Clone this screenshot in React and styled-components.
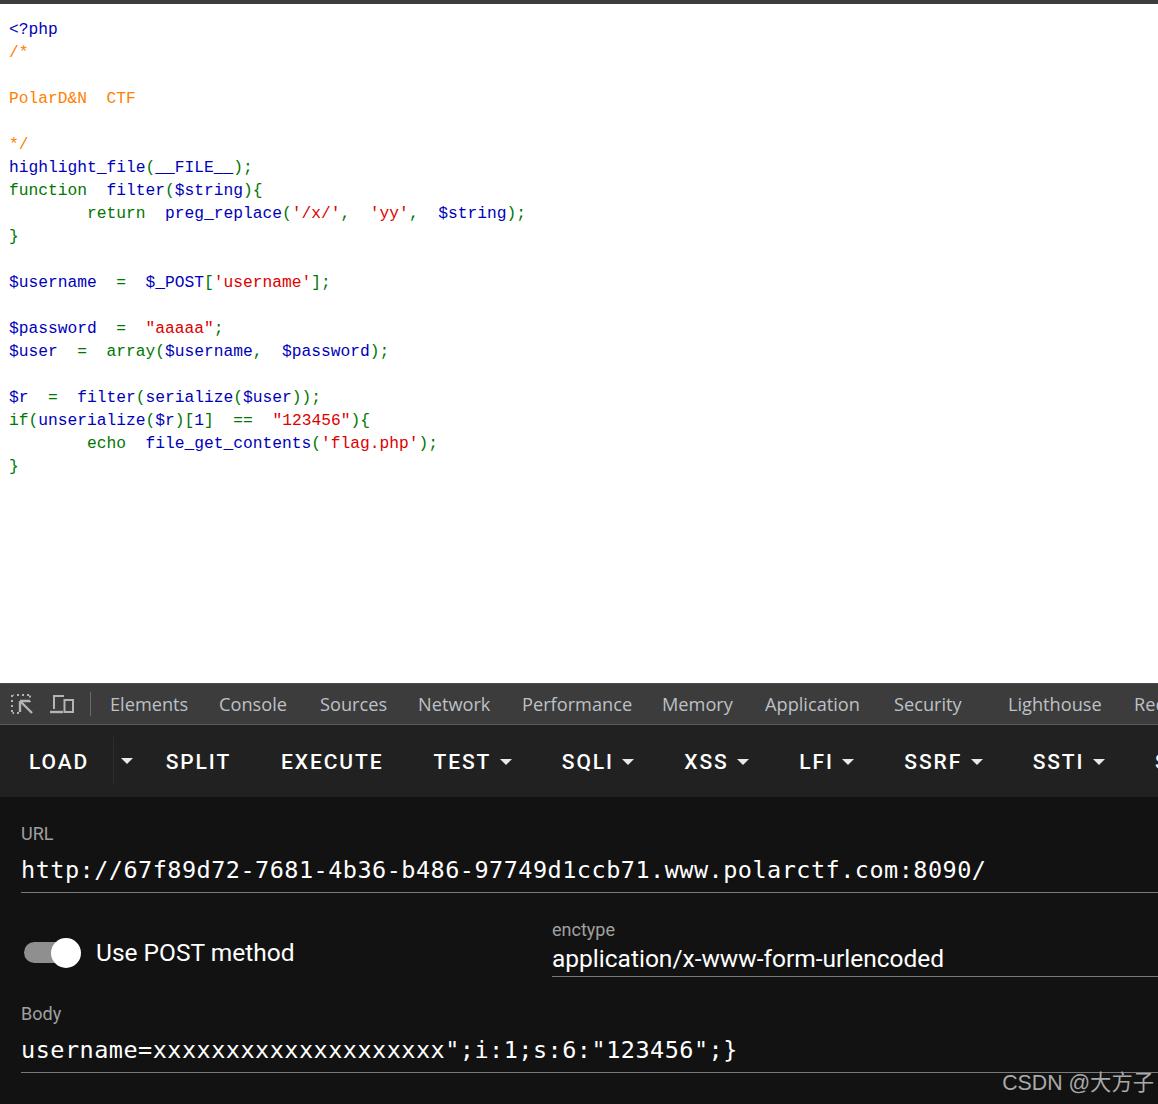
import React from 'react';
import styled, { createGlobalStyle } from 'styled-components';

const K = '#007700';
const D = '#0000BB';
const S = '#DD0000';
const C = '#FF8000';

// each line is a list of [colour, text] runs, empty list = blank line
const CODE = [
  [[D, '<?php']],
  [[C, '/*']],
  [],
  [[C, 'PolarD&N  CTF']],
  [],
  [[C, '*/']],
  [[D, 'highlight_file'], [K, '('], [D, '__FILE__'], [K, ');']],
  [[K, 'function  '], [D, 'filter'], [K, '('], [D, '$string'], [K, '){']],
  [[K, '        return  '], [D, 'preg_replace'], [K, '('], [S, "'/x/'"], [K, ',  '], [S, "'yy'"], [K, ',  '], [D, '$string'], [K, ');']],
  [[K, '}']],
  [],
  [[D, '$username  '], [K, '=  '], [D, '$_POST'], [K, '['], [S, "'username'"], [K, '];']],
  [],
  [[D, '$password  '], [K, '=  '], [S, '"aaaaa"'], [K, ';']],
  [[D, '$user  '], [K, '=  array('], [D, '$username'], [K, ',  '], [D, '$password'], [K, ');']],
  [],
  [[D, '$r  '], [K, '=  '], [D, 'filter'], [K, '('], [D, 'serialize'], [K, '('], [D, '$user'], [K, '));']],
  [[K, 'if('], [D, 'unserialize'], [K, '('], [D, '$r'], [K, ')['], [D, '1'], [K, ']  ==  '], [S, '"123456"'], [K, '){']],
  [[K, '        echo  '], [D, 'file_get_contents'], [K, '('], [S, "'flag.php'"], [K, ');']],
  [[K, '}']],
];

const PANELS = [
  { name: 'Elements', width: 78 },
  { name: 'Console', width: 70 },
  { name: 'Sources', width: 67 },
  { name: 'Network', width: 73 },
  { name: 'Performance', width: 109 },
  { name: 'Memory', width: 72 },
  { name: 'Application', width: 98 },
  { name: 'Security', width: 69, extra: 14 },
  { name: 'Lighthouse', width: 95 },
  { name: 'Recorder', width: 80 },
];

const ACTIONS = [
  { label: 'SPLIT' },
  { label: 'EXECUTE' },
  { label: 'TEST', menu: true },
  { label: 'SQLI', menu: true },
  { label: 'XSS', menu: true },
  { label: 'LFI', menu: true },
  { label: 'SSRF', menu: true },
  { label: 'SSTI', menu: true },
  { label: 'SHELL', menu: true },
];

const App = () => {
  return (
    <Page>
      <GlobalStyle />
      <Viewport>
        <TopEdge />
        <Code>
          {CODE.map((line, i) => (
            <CodeLine key={i}>
              {line.map(([color, text], j) => (
                <Run key={j} $color={color}>{text}</Run>
              ))}
            </CodeLine>
          ))}
        </Code>
      </Viewport>
      <DevTools>
        <IconGroup>
          <svg width="24" height="22" viewBox="0 0 24 22" fill="none" stroke="#b4b4b4" strokeWidth="2">
            <path d="M2 4V2h2M7 2h2M12 2h2M17 2h3v3M20 8v1M2 7v2M2 12v2M2 17v3h2M7 20h2" strokeDasharray="2 1.5" />
            <path d="M10 8v11M10 8h10M10 8l12 12" strokeWidth="2.4" />
          </svg>
          <svg width="26" height="20" viewBox="0 0 26 20" fill="none" stroke="#b4b4b4" strokeWidth="2">
            <path d="M5 15V2h10" />
            <path d="M1 18h13" strokeWidth="2.4" />
            <rect x="15.5" y="6" width="8.5" height="12" />
          </svg>
        </IconGroup>
        <ToolbarDivider />
        <PanelTabs>
          {PANELS.map((p) => (
            <PanelTab key={p.name} $width={p.width} $extra={p.extra}>{p.name}</PanelTab>
          ))}
        </PanelTabs>
      </DevTools>
      <HackBar>
        <LoadButton>LOAD</LoadButton>
        <SplitCaret><Caret /></SplitCaret>
        {ACTIONS.map((a) => (
          <ActionButton key={a.label}>
            {a.label}
            {a.menu && <Caret />}
          </ActionButton>
        ))}
      </HackBar>
      <Form>
        <UrlField>
          <FieldLabel>URL</FieldLabel>
          <MonoValue>http://67f89d72-7681-4b36-b486-97749d1ccb71.www.polarctf.com:8090/</MonoValue>
        </UrlField>
        <PostRow>
          <ToggleLabel>
            <Toggle>
              <ToggleThumb />
            </Toggle>
            Use POST method
          </ToggleLabel>
          <EnctypeField>
            <FieldLabel>enctype</FieldLabel>
            <SelectValue>application/x-www-form-urlencoded</SelectValue>
          </EnctypeField>
        </PostRow>
        <BodyField>
          <FieldLabel>Body</FieldLabel>
          <MonoValue>username=xxxxxxxxxxxxxxxxxxxx";i:1;s:6:"123456";{'}'}</MonoValue>
        </BodyField>
      </Form>
      <Watermark>CSDN @大方子</Watermark>
    </Page>
  );
};

const GlobalStyle = createGlobalStyle`
  html, body {
    margin: 0;
    padding: 0;
    background: #121212;
    overflow: hidden;
  }
`;

const Page = styled.div`
  position: relative;
  width: 1158px;
  height: 1104px;
  display: flex;
  flex-direction: column;
  overflow: hidden;
  background: #121212;
`;

const Viewport = styled.div`
  height: 683px;
  flex-shrink: 0;
  background: #fff;
`;

const TopEdge = styled.div`
  height: 4px;
  background: #3c3c3c;
`;

const Code = styled.div`
  padding: 14px 0 0 9px;
  font-family: "Liberation Mono", monospace;
  font-size: 16.25px;
  line-height: 23px;
  white-space: pre;
`;

const CodeLine = styled.div`
  height: 23px;
`;

const Run = styled.span`
  color: ${(p) => p.$color};
`;

const DevTools = styled.div`
  height: 40px;
  flex-shrink: 0;
  display: flex;
  align-items: center;
  background: #3c3c3c;
  border-top: 1px solid #4c4c4c;
  border-bottom: 1px solid #5a5a5a;
`;

const IconGroup = styled.div`
  display: flex;
  align-items: center;
  gap: 15px;
  padding-left: 10px;
  width: 80px;
  flex-shrink: 0;
  box-sizing: border-box;
`;

const ToolbarDivider = styled.div`
  width: 1px;
  height: 24px;
  margin-left: 10px;
  background: #6a6a6a;
  flex-shrink: 0;
`;

const PanelTabs = styled.div`
  display: flex;
  margin-left: 19px;
  gap: 31px;
`;

const PanelTab = styled.span`
  flex: 0 0 ${(p) => p.$width}px;
  min-width: 0;
  margin-right: ${(p) => p.$extra || 0}px;
  font-family: "Open Sans", sans-serif;
  font-size: 18.2px;
  color: #bdc1c6;
  white-space: nowrap;
`;

const HackBar = styled.div`
  height: 72px;
  box-sizing: border-box;
  padding: 2px 0 0 4px;
  flex-shrink: 0;
  display: flex;
  align-items: center;
  background: #212121;
`;

const ActionButton = styled.div`
  display: flex;
  align-items: center;
  gap: 8.5px;
  padding: 0 25px;
  flex-shrink: 0;
  font-family: Roboto, sans-serif;
  font-weight: 500;
  font-size: 21px;
  letter-spacing: 1.9px;
  color: #fff;
`;

const LoadButton = styled(ActionButton)`
  padding-right: 23.5px;
`;

const SplitCaret = styled.div`
  height: 48px;
  width: 28px;
  margin-top: -2px;
  box-sizing: border-box;
  flex-shrink: 0;
  display: flex;
  align-items: center;
  padding-left: 7px;
  border-left: 1px solid #2e2e2e;
`;

const Caret = styled.span`
  width: 0;
  height: 0;
  border-left: 6px solid transparent;
  border-right: 6px solid transparent;
  border-top: 6px solid #fff;
  opacity: 0.9;
`;

const Form = styled.div`
  padding: 26px 0 0 21px;
  display: flex;
  flex-direction: column;
`;

const FieldLabel = styled.div`
  font-family: Roboto, sans-serif;
  font-size: 18px;
  line-height: 22px;
  color: #a0a0a0;
`;

const MonoValue = styled.div`
  margin-top: 11px;
  padding-bottom: 8px;
  border-bottom: 1px solid #7a7a7a;
  font-family: "DejaVu Sans Mono", monospace;
  font-size: 23.5px;
  letter-spacing: 0.48px;
  line-height: 28px;
  color: #fff;
  white-space: nowrap;
`;

const UrlField = styled.div``;

const PostRow = styled.div`
  display: flex;
  align-items: center;
  margin-top: 26px;
`;

const ToggleLabel = styled.div`
  display: flex;
  align-items: center;
  width: 531px;
  padding-top: 8px;
  flex-shrink: 0;
  gap: 18px;
  font-family: Roboto, sans-serif;
  font-size: 24.5px;
  color: #fff;
`;

const Toggle = styled.div`
  position: relative;
  width: 54px;
  height: 21px;
  margin-left: 3px;
  border-radius: 11px;
  background: #8f8f8f;
  flex-shrink: 0;
`;

const ToggleThumb = styled.div`
  position: absolute;
  right: -3px;
  top: -4px;
  width: 30px;
  height: 30px;
  border-radius: 50%;
  background: #fff;
`;

const EnctypeField = styled.div`
  flex: 1;
`;

const SelectValue = styled.div`
  padding: 3px 0 3px;
  border-bottom: 1px solid #7a7a7a;
  font-family: Roboto, sans-serif;
  font-size: 24.5px;
  line-height: 29px;
  color: #fff;
  white-space: nowrap;
`;

const BodyField = styled.div`
  margin-top: 26px;
`;

const Watermark = styled.div`
  position: absolute;
  right: 4px;
  top: 1069px;
  font-family: "Liberation Sans", "Noto Sans CJK SC", sans-serif;
  font-size: 21.3px;
  line-height: 28px;
  color: #a9a9a9;
`;

export default App;
